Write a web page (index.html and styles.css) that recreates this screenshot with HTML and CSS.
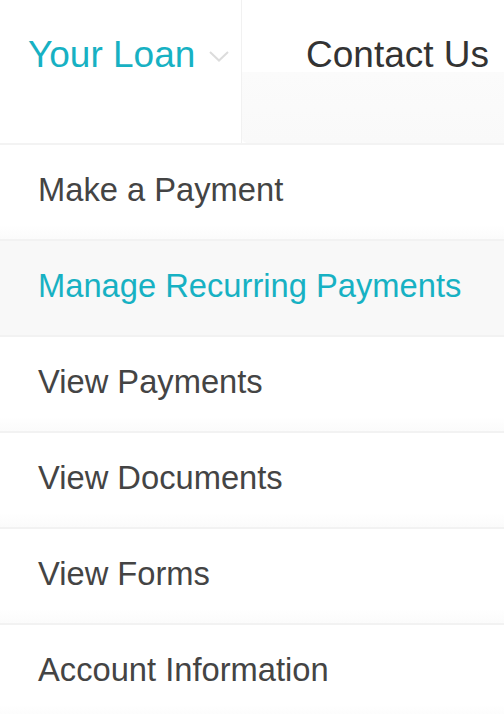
FILE: index.html
```html
<!DOCTYPE html>
<html lang="en">
<head>
<meta charset="utf-8">
<title>Your Loan menu</title>
<link rel="stylesheet" href="styles.css">
</head>
<body>
<nav class="topnav">
  <div class="nav-item active">
    <span class="nav-label">Your Loan</span>
    <svg class="chevron" width="20" height="11" viewBox="0 0 20 11" aria-hidden="true">
      <polyline points="1,1 10,9.5 19,1" fill="none" stroke="#dcdcdc" stroke-width="2"/>
    </svg>
  </div>
  <div class="nav-item contact">
    <span class="nav-label">Contact Us</span>
  </div>
</nav>
<ul class="menu">
  <li class="menu-item">Make a Payment</li>
  <li class="menu-item selected">Manage Recurring Payments</li>
  <li class="menu-item">View Payments</li>
  <li class="menu-item">View Documents</li>
  <li class="menu-item">View Forms</li>
  <li class="menu-item">Account Information</li>
</ul>
</body>
</html>
```
FILE: styles.css
```css
html, body {
  margin: 0;
  padding: 0;
  background: #ffffff;
  font-family: "Liberation Sans", Arial, sans-serif;
  overflow: hidden;
}

.topnav {
  display: flex;
  height: 143px;
  border-bottom: 2px solid #f3f3f3;
}

.nav-item {
  display: flex;
  align-items: center;
  font-size: 37px;
  padding-bottom: 33px;
  box-sizing: border-box;
}

.nav-item.active {
  width: 242px;
  padding-left: 28px;
  color: #17b1c3;
  border-right: 1px solid #f1f1f1;
}

.chevron {
  margin-left: 14px;
  margin-top: 2px;
}

.nav-item.contact {
  flex: 1;
  padding-left: 64px;
  color: #333333;
  background: linear-gradient(to bottom, #ffffff 0, #ffffff 72px, #fbfbfb 72px, #f9f9f9 100%);
  border-bottom-left-radius: 5px;
  white-space: nowrap;
}

.menu {
  list-style: none;
  margin: 0;
  padding: 0;
}

.menu-item {
  display: flex;
  align-items: center;
  height: 96px;
  padding-left: 38px;
  padding-bottom: 4px;
  box-sizing: border-box;
  font-size: 32.7px;
  color: #444444;
  border-bottom: 2px solid #f2f2f2;
  background: linear-gradient(to bottom, #ffffff 0, #ffffff 85%, #fbfbfb 100%);
}

.menu-item.selected {
  color: #17b1c3;
  background: #f8f8f8;
}
```
